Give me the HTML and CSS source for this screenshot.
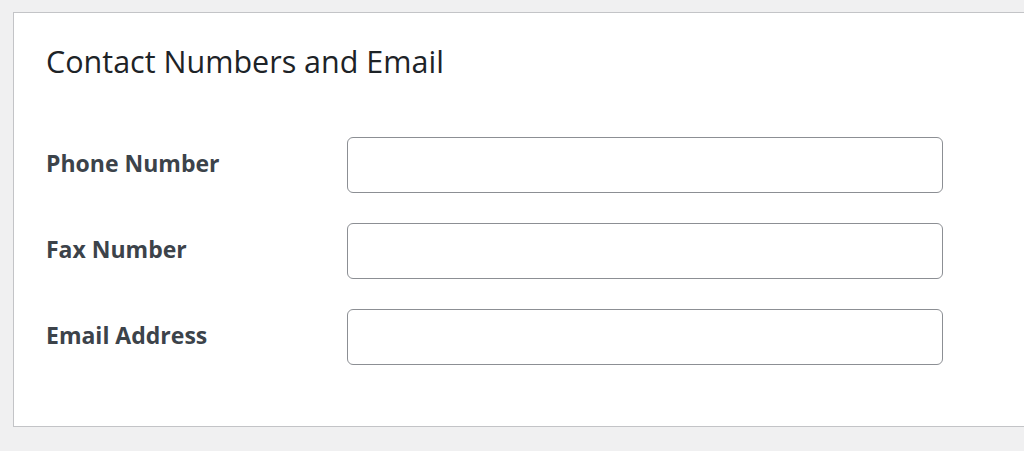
FILE: index.html
```html
<!DOCTYPE html>
<html lang="en">
  <head>
    <meta charset="UTF-8" />
    <meta name="viewport" content="width=device-width, initial-scale=1.0" />
    <title>Contact Numbers and Email</title>
    <link rel="stylesheet" href="styles.css">
  </head>
  <body>
    <div class="panel">
      <h2 class="panel-title">Contact Numbers and Email</h2>

      <form class="form-table">
        <div class="form-row">
          <label for="phone">Phone Number</label>
          <input type="text" id="phone" />
        </div>

        <div class="form-row">
          <label for="fax">Fax Number</label>
          <input type="text" id="fax" />
        </div>

        <div class="form-row">
          <label for="email">Email Address</label>
          <input type="email" id="email" />
        </div>
      </form>
    </div>
  </body>
</html>
```

FILE: styles.css
```css
* {
  margin: 0;
  padding: 0;
  box-sizing: border-box;
  font-family: "Open Sans", "Noto Sans", sans-serif;
}

body {
  background-color: #f0f0f1;
  padding: 12px 0 0 13px;
  min-height: 100vh;
}

.panel {
  height: 415px;
  background: #fff;
  border: 1px solid #c3c4c7;
  border-right: 0;
  padding: 27px 32px 0;
}

.panel-title {
  font-size: 30.5px;
  font-weight: 400;
  line-height: 42px;
  color: #1d2327;
  margin-bottom: 55px;
}

.form-table {
  display: flex;
  flex-direction: column;
  gap: 30px;
}

.form-row {
  display: grid;
  grid-template-columns: 301px 596px;
  align-items: start;
}

.form-row label {
  font-size: 23px;
  font-weight: 700;
  line-height: 32px;
  color: #3c434a;
  padding-top: 10px;
}

.form-row input {
  height: 56px;
  border: 1px solid #8c8f94;
  border-radius: 6px;
  background: #fff;
  font-size: 20px;
  padding: 0 12px;
}
```
